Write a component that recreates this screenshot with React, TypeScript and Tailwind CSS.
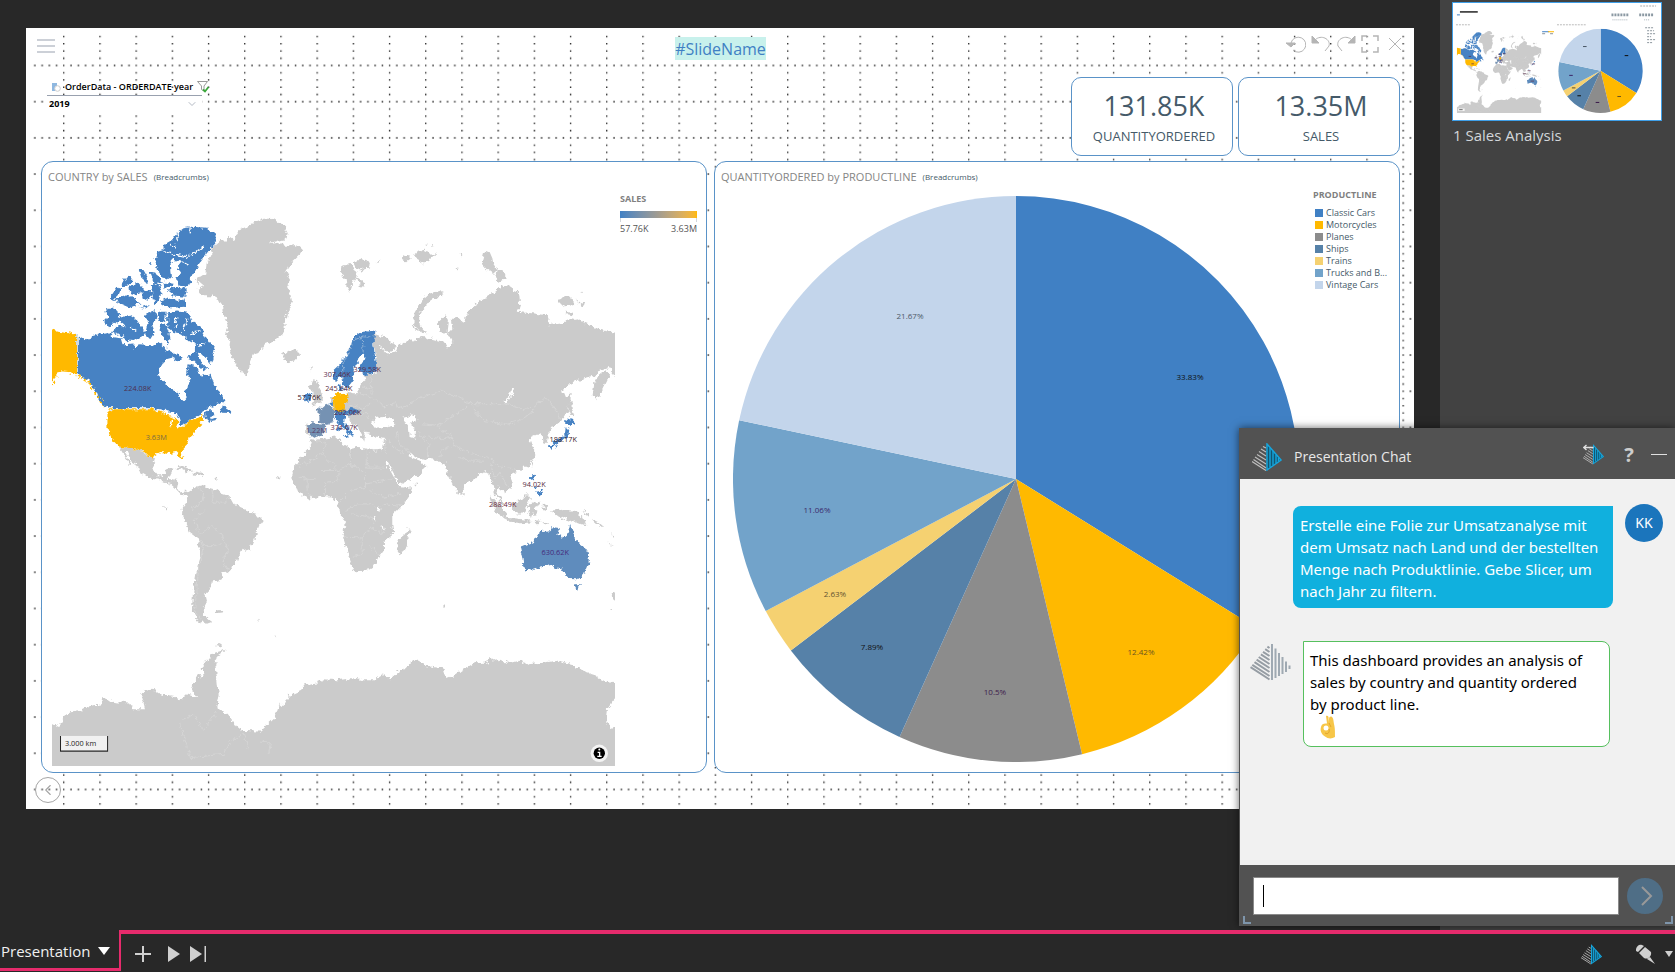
import React from 'react';
import { ChevronDown, ChevronLeft } from 'lucide-react';

// lx / ly: where the percentage sits inside the 566 x 566 pie
const products = [
  { name: 'Classic Cars', share: 33.83, color: '#4080c4', label: '#101010', lx: 457, ly: 181 },
  { name: 'Motorcycles', share: 12.42, color: '#ffb900', label: '#6b5420', lx: 408, ly: 456 },
  { name: 'Planes', share: 10.5, color: '#8c8c8c', label: '#3c1c4c', lx: 262, ly: 496 },
  { name: 'Ships', share: 7.89, color: '#5681a8', label: '#101010', lx: 139, ly: 451 },
  { name: 'Trains', share: 2.63, color: '#f5d171', label: '#5f5230', lx: 102, ly: 398 },
  { name: 'Trucks and B...', share: 11.06, color: '#72a3ca', label: '#3c2a6c', lx: 84, ly: 314 },
  { name: 'Vintage Cars', share: 21.67, color: '#c3d5eb', label: '#4d5a68', lx: 177, ly: 120 },
];

const mapLabels = [
  { text: '224.08K', x: 323, y: 603, color: '#4e2f4e' },
  { text: '3.63M', x: 378, y: 750, color: '#7a6a45' },
  { text: '307.46K', x: 920, y: 560, color: '#5a2c4a' },
  { text: '329.58K', x: 1010, y: 544, color: '#5a2c4a' },
  { text: '245.64K', x: 925, y: 602, color: '#5a2c3f' },
  { text: '57.76K', x: 836, y: 630, color: '#3a2028' },
  { text: '202.06K', x: 952, y: 675, color: '#5a2c4a' },
  { text: '374.67K', x: 941, y: 718, color: '#5a2c4a' },
  { text: '1.22M', x: 858, y: 727, color: '#5c4068' },
  { text: '188.17K', x: 1597, y: 755, color: '#3a2028' },
  { text: '94.02K', x: 1510, y: 891, color: '#5a2c3f' },
  { text: '288.49K', x: 1416, y: 950, color: '#6a2c3c' },
  { text: '630.62K', x: 1573, y: 1094, color: '#46297a' },
];

const point = (share: number) => {
  const angle = (share / 100) * Math.PI * 2;
  return [283 + 283 * Math.sin(angle), 283 - 283 * Math.cos(angle)];
};

const slices = products.map((product, index) => {
  const start = products.slice(0, index).reduce((sum, p) => sum + p.share, 0);
  const [x1, y1] = point(start);
  const [x2, y2] = point(start + product.share);
  return { ...product, d: `M283 283L${x1} ${y1}A283 283 0 0 1 ${x2} ${y2}Z` };
});

const PieShapes = () => (
  <>
    {slices.map((slice) => (
      <path key={slice.name} d={slice.d} fill={slice.color} />
    ))}
  </>
);

const MapShapes = ({ id, rough = false }: { id: string; rough?: boolean }) => (
  <>
    <defs>
      <filter id={`${id}-coast`} x="0" y="0" width="1" height="1">
        <feTurbulence type="fractalNoise" baseFrequency="0.07" numOctaves="3" seed="4" />
        <feDisplacementMap in="SourceGraphic" scale="20" xChannelSelector="R" yChannelSelector="G" />
      </filter>
      <clipPath id={`${id}-frame`}>
        <rect x="66" y="60" width="1686" height="1665" />
      </clipPath>
    </defs>
    <g clipPath={`url(#${id}-frame)`}>
      <g filter={rough ? `url(#${id}-coast)` : undefined}>
        <rect x="0" y="0" width="1860" height="1800" fill="none" />

        {/* Land without sales */}
        <g fill="#cbcbcb">
          <path d="M556 160L570 148L585 152L598 140L612 150L618 132L630 118L655 108L672 96L700 86L725 86L742 96L760 108L772 130L765 148L740 152L712 162L740 158L765 168L790 162L800 164L816 178L806 196L790 212L775 225L768 245L782 270L770 290L780 310L785 335L776 355L770 380L762 400L764 425L735 450L705 462L690 485L670 492L660 515L652 556L635 548L618 525L605 505L597 475L600 450L585 430L592 400L582 370L575 335L545 318L515 318L500 300L520 288L497 268L525 250L530 215L548 190L540 180Z" />
          <path d="M267 770L325 775L350 792L362 806L375 800L370 820L370 840L385 858L405 852L412 832L427 835L418 855L412 865L435 868L444 875L440 895L455 905L472 903L478 914L455 914L435 893L420 880L400 877L385 864L358 862L330 845L315 820L295 795L290 785L282 785L308 824L300 822L285 800Z" />
          <path d="M435 832L455 825L490 842L472 845L455 836ZM490 852L500 843L522 848L518 856Z" />
          <g transform="translate(0 810)">
            <path d="M472 95L500 78L515 75L545 85L560 88L575 100L600 108L615 135L650 150L680 160L697 178L678 205L672 240L660 262L630 272L620 300L598 332L575 335L582 352L565 360L545 362L540 385L525 400L530 420L520 440L522 465L545 482L525 490L500 478L485 450L488 400L498 340L508 280L508 235L480 215L455 165L458 140L470 125Z" />
            <path d="M557 450L575 448L577 458L562 460ZM680 474L692 480L686 482ZM732 522L740 522L736 528ZM556 556L578 550L570 560ZM400 137l10 2 -4 5zM555 50l6 2 -2 10zM742 46l8 4 -2 8z" />
            <path d="M40 785L66 790L88 795L100 770L120 755L150 750L180 735L215 730L220 708L240 722L300 728L310 745L345 745L335 705L345 685L375 688L395 702L430 705L450 718L470 700L498 710L482 680L500 645L520 650L517 615L535 590L545 578L588 566L560 585L555 610L560 650L565 700L558 740L590 760L620 800L645 810L690 812L735 770L748 725L760 735L775 705L810 690L825 670L860 665L880 655L920 658L960 652L1000 658L1030 658L1055 643L1078 655L1100 635L1125 622L1145 600L1165 600L1180 615L1235 622L1240 638L1262 652L1290 630L1325 608L1370 605L1378 590L1385 602L1410 595L1435 608L1470 598L1490 610L1540 605L1580 600L1630 612L1650 628L1690 640L1720 662L1780 672L1780 700L1752 715L1728 745L1725 770L1735 805L1780 790L1780 960L40 960Z" />
          </g>
          <g transform="translate(720 0)">
            <path d="M308 428L345 440L372 465L360 485L340 480L335 470L325 465L350 495L375 485L380 465L400 455L430 450L455 440L480 445L520 455L530 475L548 455L540 440L505 420L505 395L525 372L535 390L530 430L545 415L540 385L560 380L575 395L590 370L610 345L650 320L690 285L715 290L745 310L748 340L740 365L790 370L830 375L835 405L870 400L910 385L960 405L990 420L1060 432L1060 565L1032 555L1012 530L985 540L965 560L930 570L900 575L870 605L895 620L893 660L870 690L850 705L835 725L828 757L815 757L812 728L795 735L775 745L790 780L790 800L770 825L745 840L728 845L715 852L727 880L722 892L705 905L690 895L680 885L678 905L690 925L705 947L692 942L672 912L668 880L655 850L640 845L625 855L600 870L577 890L575 905L560 909L545 880L530 850L525 820L500 812L470 807L440 802L413 785L425 805L450 815L467 828L450 850L400 877L385 882L370 850L345 805L333 785L336 765L342 742L300 737L285 718L278 735L290 750L272 742L265 715L245 700L235 680L215 672L195 670L188 650L176 640L186 622L205 612L225 612L258 605L275 578L290 565L282 560L285 553L316 550L316 500L308 455Z" />
            <path d="M125 750L155 745L205 740L215 760L240 775L265 770L310 780L330 778L348 800L345 815L370 860L385 885L390 895L425 890L420 905L395 945L365 975L365 1000L368 1030L340 1055L340 1080L325 1100L310 1125L285 1140L252 1142L240 1115L230 1080L216 1035L225 1000L205 960L200 935L185 918L165 917L110 925L85 905L68 880L65 855L75 825L95 795L120 770Z" />
            <path d="M30 485L45 490L60 480L80 482L86 495L75 508L50 516L35 508L40 500ZM212 230L235 222L250 235L262 255L245 280L240 308L228 290L225 265L212 255ZM250 215L275 207L298 215L295 235L275 242L258 232ZM258 258L272 268L282 290L268 288ZM390 205L415 192L420 205L405 218ZM430 195L460 172L470 190L495 190L480 205L460 220L440 210ZM458 162l10 -2 -3 8zM480 165l9 2 -6 4z" />
            <path d="M425 400L432 370L455 330L480 310L510 300L515 312L480 330L460 355L445 380L448 405L470 430L440 418ZM632 220L640 190L655 182L665 205L668 225L678 240L670 255L650 240ZM680 240L695 240L705 265L685 275L675 272ZM862 330L880 318L905 325L910 345L880 348ZM915 332L942 340L935 350ZM882 362L900 365L905 375L890 372ZM318 214l12 -2 -4 7zM566 192l9 0 -3 5zM553 232l8 1 -3 5zM928 307l8 -2 -2 5z" />
            <path d="M970 580L985 555L1005 540L1014 560L995 600L975 630L965 615ZM894 608L902 615L902 650L910 677L898 677L892 650ZM782 815L790 812L786 832ZM125 570L140 572L145 590L160 615L162 630L140 640L122 646L135 628L125 610L117 590ZM108 700L118 700L116 736L107 733ZM118 530l6 2 -2 10z" />
          </g>
          <g transform="translate(900 810)">
            <path d="M235 202L240 215L225 265L210 278L200 262L205 235L222 222ZM391 85L402 98L398 108L390 100ZM475 108L490 115L515 142L532 165L522 174L500 157L480 127ZM525 172L560 174L590 178L605 185L570 188L530 182ZM612 180L632 180L629 187L612 188ZM635 186L655 182L640 194ZM545 125L575 115L590 98L600 112L587 140L580 160L555 158L545 145Z" />
            <path d="M596 132L625 123L627 130L608 138L620 165L612 166L605 155L600 170L594 150ZM640 126L648 140L643 154L638 140ZM660 150L690 148L735 155L755 172L770 194L735 187L705 177L680 165ZM752 150L776 162L770 168ZM782 175L804 186L818 198L798 190ZM840 218L852 224L852 232ZM828 242L848 258L842 258ZM856 390L842 405L848 418L860 420ZM332 430L344 432L338 438ZM838 444l6 2 -4 3zM248 70l14 0 -6 5z" />
          </g>
        </g>

        {/* Inland waters */}
        <g transform="translate(720 0)" fill="#ffffff">
          <path d="M303 698L315 680L345 675L352 685L372 682L374 702L340 710L315 712ZM400 680L430 670L437 688L420 698L436 722L434 742L417 737L415 712L402 695Z" />
          <path d="M318 952l8 -4 4 10 -8 6zM312 974l4 18M335 1005l3 14" stroke="#ffffff" strokeWidth="4" />
          <path d="M700 634L718 622L727 596" fill="none" stroke="#ffffff" strokeWidth="6" />
        </g>

        {/* Country borders */}
        <g fill="none" stroke="#dadada" strokeWidth="2">
          <path d="M395 875L412 866M418 882L436 872M500 890L520 905L515 935L490 955L480 950M545 895L550 935L585 935L600 918M520 960L495 990L500 1015L512 1032L545 1005L572 1030L580 1055L595 1080L575 1110L595 1145M508 1045L520 1065L555 1065L572 1060M520 1065L505 1130L500 1200L492 1260L510 1285M455 1585L490 1570L520 1620L560 1560M448 1600L480 1700L580 1690L600 1650L640 1630L655 1680M690 1650L720 1655L715 1690" />
          <g transform="translate(720 0)">
            <path d="M340 650L370 640L395 655L440 625L510 603L560 620L600 640L700 640L750 655L790 650L825 620L850 650L870 690M600 645L640 690L700 703L750 690L790 660M455 700L500 705L540 680L590 650M500 710L540 735L550 765L600 790L650 800L690 830L735 835M470 740L520 745L545 740M500 810L520 775L545 765M565 800L600 812L640 812M660 820L670 860L690 850L710 890M232 610L262 608L300 620L345 650M240 645L280 655L300 640M250 670L290 670L300 690M380 720L385 760L415 785M440 725L475 760L470 800M350 745L370 770L400 790M300 560L305 610M275 590L300 595M340 740L345 790" />
            <path d="M130 750L165 755L155 790L205 840L240 820L240 775M290 775L290 830L340 830M155 790L110 820L75 825M150 840L205 840M165 915L165 880L205 870L205 840M240 820L285 850L285 890L240 900L205 935M285 880L340 870L370 860M300 900L340 920L395 910M225 960L260 940L310 940M218 1040L275 1042L300 1010L340 1030M275 1042L275 1090L250 1100M300 1060L325 1100M245 970L300 980L310 1000M320 960L345 940L395 945M110 860L110 900L125 920M85 860L130 865" />
          </g>
        </g>

        {/* Canada */}
        <g fill="#4682c3">
          <path d="M400 165L425 150L440 130L460 115L490 110L530 113L555 135L558 152L540 175L522 200L505 225L490 245L478 262L484 280L465 292L445 285L440 265L452 250L440 235L455 215L430 208L418 215L422 262L408 270L395 262L388 245L380 240L376 210L382 185L400 180Z" />
          <path d="M393 330L420 322L445 332L460 328L463 350L435 352L400 350ZM410 300L440 292L470 298L465 320L430 316ZM362 285L380 278L397 300L388 330L375 345L368 320ZM326 240L340 240L353 262L352 282L335 267ZM358 248L378 250L395 278L370 277ZM288 262L306 258L302 278L288 287L272 292ZM238 324L262 290L275 294L270 308L250 328ZM250 328L290 316L312 325L330 340L300 352L272 340ZM298 288L325 278L342 300L320 315L300 308ZM333 305L355 298L367 314L352 332L338 324ZM355 218l8 -2 -2 8zM400 275L430 278L428 290L402 292ZM330 350L355 345L352 355Z" />
          <path d="M228 353L250 353L273 372L262 395L240 411L221 402L232 380ZM262 385L300 376L318 388L332 410L347 425L335 442L310 452L290 450L262 430L245 424L262 408L288 408ZM345 370L374 360L380 385L365 402L374 425L360 447L345 432L352 400ZM384 362L406 362L406 387L390 396L382 380ZM411 370L440 364L477 368L487 395L512 410L527 440L554 478L547 500L541 522L525 497L505 492L515 520L537 542L510 532L485 507L470 500L497 485L497 460L478 450L455 430L430 425L411 412ZM425 492L445 490L455 508L435 515Z" />
          <path d="M143 435L168 450L180 440L210 432L240 428L248 440L275 445L280 462L310 460L318 478L325 462L365 465L385 455L400 470L412 480L410 455L395 430L388 405L405 400L415 425L418 450L410 478L430 490L425 505L405 510L390 535L384 560L400 575L412 590L440 602L458 634L466 625L464 600L475 590L478 570L468 545L472 525L500 530L512 560L540 550L548 575L560 600L582 620L585 635L540 650L520 665L495 680L480 695L450 705L448 690L440 668L400 660L375 655L232 655L205 620L195 595L175 570L143 555Z" />
          <path d="M568 655L585 643L602 668L575 667ZM524 668L540 655L550 672L538 688L562 680L555 690L530 694Z" />
        </g>
        <path d="M400 185L430 192L470 200M440 130L445 150M520 170L490 190L470 205M455 215L475 225M420 160L435 175M480 112L478 130M300 410L320 425M440 380L435 410M470 385L460 420M260 400L285 412M505 425L480 430M525 460L500 465" fill="none" stroke="#ffffff" strokeWidth="4" />
        <path d="M235 655L375 655L410 665" fill="none" stroke="#ffffff" strokeWidth="3" />

        {/* United States */}
        <g fill="#ffb900">
          <path d="M40 414L66 418L90 425L120 430L141 435L141 553L115 545L90 543L78 560L66 572L40 580Z" />
          <path d="M232 657L375 657L400 664L412 674L430 677L445 692L442 710L470 700L495 687L518 670L525 690L508 702L495 722L478 737L475 757L455 777L452 787L460 808L450 804L442 784L420 788L390 785L372 795L365 808L350 790L325 775L290 772L265 768L245 745L232 715Z" />
        </g>
        <path d="M145 556L178 578L196 610L222 648M68 582L80 570" fill="none" stroke="#ffb900" strokeWidth="7" strokeDasharray="9 8" />
        <path d="M395 668L428 676L436 690M420 708L424 685M440 712L462 702" fill="none" stroke="#ffffff" strokeWidth="5" />

        {/* Europe, Asia and Australia */}
        <g transform="translate(720 0)" fill="#4682c3">
          <path d="M187 570L188 540L215 515L235 480L250 440L275 422L315 418L312 440L308 460L316 520L318 545L285 555L268 545L268 525L285 500L280 488L268 498L262 520L250 530L247 570L232 590L220 587L215 553L200 572Z" />
          <path d="M201 586L212 580L216 596L206 603ZM219 592l8 2 -4 8zM105 612L122 604L121 628L104 633ZM172 638L190 633L190 648ZM192 680L215 666L223 685L217 695L235 713L247 725L241 737L225 717L205 702ZM220 735L240 732L233 742ZM200 712L209 712L207 727ZM192 664L245 653L264 658L260 670L220 674L198 676Z" />
          <path d="M886 690L900 684L914 697L900 706L886 706ZM884 714L895 714L893 737L875 751L855 760L843 767L850 752L872 742L882 730ZM833 765L845 763L841 778ZM850 767L864 762L860 771ZM782 852L793 850L789 873L780 866ZM793 904L813 901L811 915L798 913ZM790 885l12 4 -4 6z" />
        </g>
        <g transform="translate(720 0)">
          <path d="M133 660L150 655L167 640L192 655L190 692L170 703L143 696L150 674ZM113 698L165 704L157 735L125 743L117 730Z" fill="#7592b3" />
          <path d="M190 620L205 603L209 612L230 610L233 635L220 645L223 662L210 665L192 657Z" fill="#ffb900" />
          <path d="M218 565L216 525L233 485L248 450L275 440L278 490M300 440L278 440M165 703L192 692" fill="none" stroke="#b9cbe0" strokeWidth="2" />
        </g>
        <g transform="translate(900 810)" fill="#5e8cbd">
          <path d="M567 260L605 245L625 215L655 212L665 200L687 203L682 222L705 232L712 215L717 192L726 215L737 240L757 255L774 280L773 305L757 345L740 356L715 355L700 337L690 320L680 330L660 310L625 318L580 333L575 295ZM729 371L750 371L740 390Z" />
        </g>
      </g>
    </g>
  </>
);

const WorldMap = () => (
  <svg viewBox="66 60 1686 1665" className="block w-full font-['Open_Sans',sans-serif]" role="img" aria-label="COUNTRY by SALES">
    <MapShapes id="map" rough />
    <g fontSize="22" textAnchor="middle">
      {mapLabels.map((label) => (
        <text key={label.text} x={label.x} y={label.y} fill={label.color}>
          {label.text}
        </text>
      ))}
    </g>
    <rect x="90" y="1635" width="144" height="47" fill="#f1f1f1" />
    <path d="M91.500 1635V1680.500H232.500V1635" fill="none" stroke="#222222" strokeWidth="3" />
    <text x="105" y="1665" fontSize="22" fill="#222222">3.000 km</text>
    <circle cx="1705" cy="1687" r="26" fill="#f4f4f4" />
    <circle cx="1705" cy="1687" r="17" fill="#000000" />
    <path d="M1700 1684h6v12M1699 1696h13" fill="none" stroke="#ffffff" strokeWidth="4" />
    <circle cx="1705" cy="1676" r="3" fill="#ffffff" />
  </svg>
);

const Pyramid = ({ className }: { className: string }) => (
  <svg viewBox="0 0 40 38" className={className} fill="none" aria-hidden="true">
    <path d="M19 5L16.900 3.600M19 9L14.700 6.200M19 13L12.500 8.800M19 17L10.400 11.400M19 21L8.200 14M19 25L6.100 16.600M19 29L4 19.200M19 33L1.800 21.800M19 36.500L0 24.200" stroke="#969da4" strokeWidth="2" />
    <path d="M21.500 1V37M25 5.500V35M28.500 10V33M32 14V31M35.500 18.500V29M39 22.500V26" stroke="#9fa9b2" strokeWidth="2" />
  </svg>
);

const BluePyramid = ({ className, back }: { className: string; back?: boolean }) => (
  <svg viewBox="0 0 30 28" className={className} fill="none" aria-hidden="true">
    <path d="M14 5L11 3.500M14 9L9 6M14 13L7 8.500M14 17L5 11.500M14 21L3 14M14 25L1.500 16.500M14 27.500L0 18.500" stroke="#bdbdbd" strokeWidth="1.200" />
    <path d="M15 1L29 17L15 27Z" fill="#12556f" stroke="#16a5dc" strokeWidth="1.500" />
    <path d="M18 5V24M21 8V22M24 12V20M26.500 15V18" stroke="#16a5dc" strokeWidth="1.400" />
    {back && <path d="M15 4H1M5 0.500L1 4L5 7.500" stroke="#e0e0e0" strokeWidth="2" />}
  </svg>
);

const OkHand = () => (
  <svg viewBox="0 0 16 24" className="ml-2.5 h-6 w-4" role="img" aria-label="OK hand">
    <path d="M6 1C8 0 9 2 8.500 4L9 8C9 5 8.500 1.500 11 1.500C13.500 2 13.500 6 14 9C15 13 15 16 15 22C12 24 8 24 5 21.500C1 19 0 15 1 12C1.500 9 4 8 7 8.500Z" fill="#f7c648" />
    <circle cx="6" cy="13" r="2.500" fill="#ffffff" />
    <path d="M9 8L11 12M5 18C8 20 10 17 9 14" fill="none" stroke="#e3a62c" />
  </svg>
);

const SlideGrid = () => (
  <svg className="absolute inset-0 h-full w-full" aria-hidden="true">
    <defs>
      <pattern id="grid" x="0.900" y="0.300" width="36.200" height="36.200" patternUnits="userSpaceOnUse">
        <path d="M0.500 0.200v1.500M0.500 7.500v1.500M0.500 14.700v1.500M0.500 21.900v1.500M0.500 29.200v1.500M7.200 1h1.500M14.500 1h1.500M21.700 1h1.500M29 1h1.500" stroke="#222222" strokeWidth="1.600" />
      </pattern>
    </defs>
    <rect width="100%" height="100%" fill="url(#grid)" />
    <rect width="100%" height="3" fill="#ffffff" />
    <rect width="3" height="100%" fill="#ffffff" />
  </svg>
);

const Slicer = () => (
  <label className="flex h-[35px] w-[155px] flex-col text-[9px] font-semibold text-black">
    <span className="flex h-[19px] items-center border-b border-gray-400 pt-0.5 whitespace-nowrap">
      <svg viewBox="0 0 10 10" className="mr-1 ml-1 h-[10px] w-[10px] shrink-0" aria-hidden="true">
        <path d="M1 1h5v3H4v5H1z" fill="#8fb8e0" />
        <circle cx="6.500" cy="6.500" r="2.800" fill="#ffffff" stroke="#cccccc" />
      </svg>
      OrderData - ORDERDATE year
      <svg viewBox="0 0 12 12" className="ml-1 h-3 w-3 shrink-0" fill="none" aria-hidden="true">
        <path d="M0.500 0.500h10L7 5v5L4.500 8.500V5Z" stroke="#999999" />
        <path d="M6 8.500L8 10.500L11.500 6" stroke="#3aa83a" strokeWidth="1.800" />
      </svg>
    </span>
    <span className="relative flex h-4 items-center bg-white">
      <select className="w-full appearance-none bg-transparent pl-0.5 font-bold" defaultValue="2019">
        <option>2019</option>
      </select>
      <ChevronDown className="absolute right-1 h-3 w-3 text-gray-400" strokeWidth={1.5} />
    </span>
  </label>
);

const Kpi = ({ value, name }: { value: string; name: string }) => (
  <div className="flex h-[79px] w-[162px] flex-col items-center justify-center rounded-[10px] border border-[#5a93c8] bg-white pt-0.5 pl-1 text-[#455a69]">
    <div className="text-[27px] leading-9">{value}</div>
    <div className="text-[13px] leading-6">{name}</div>
  </div>
);

const PanelTitle = ({ children }: { children: string }) => (
  <div className="flex h-[30px] items-center gap-1.5 px-1.5 text-[11px] text-[#858585]">
    {children}
    <span className="text-[8px] text-[#455a69]">(Breadcrumbs)</span>
  </div>
);

const Thumbnail = () => (
  <svg viewBox="0 0 210 118" className="block w-full border border-[#3f9fe8] bg-white" aria-hidden="true">
    <svg x="4" y="27" width="85" height="84" viewBox="66 60 1686 1665">
      <MapShapes id="thumb" />
      <path d="M300 594h50M355 742h50M890 550h60M980 540h60M900 600h50M820 622h50M920 668h60M910 708h60M1560 745h70M1480 880h60M1390 940h60M1540 1088h70" stroke="#5a2c4a" strokeWidth="14" />
      <path d="M90 1660h130" stroke="#f4f4f4" strokeWidth="50" />
      <path d="M110 1660h70" stroke="#333333" strokeWidth="14" />
    </svg>
    <svg x="106" y="26" width="86" height="85" viewBox="0 0 566 566">
      <PieShapes />
      {slices.map((slice) => (
        <rect key={slice.name} x={slice.lx - 12} y={slice.ly - 4} width="24" height="7" fill={slice.label} />
      ))}
    </svg>
    <path d="M7 9h18" stroke="#222222" strokeWidth="1.500" />
    <path d="M4 12h3" stroke="#4080c4" />
    <path d="M3 22h15M105 22h30" stroke="#bbbbbb" strokeWidth="1" strokeDasharray="2 1" />
    <path d="M160 12h18M188 12h14" stroke="#8b99a3" strokeWidth="3" strokeDasharray="2 1" />
    <path d="M161 17h16M193 17h6" stroke="#a9b3ba" strokeDasharray="1 1" />
    <path d="M90 29h7" stroke="#4080c4" />
    <path d="M96 29h6" stroke="#ffb900" />
    <path d="M90 31h3M98 31h3" stroke="#8a949c" />
    <path d="M194 25h9M196 28h7M196 31h8M196 34h4M196 37h9M196 40h6" stroke="#8a949c" strokeDasharray="2 1" />
    <path d="M189 3h16" stroke="#d5d5d5" strokeWidth="2" strokeDasharray="2 1" />
  </svg>
);

const ChatWindow = () => (
  <section className="absolute right-0 bottom-1 flex h-[498px] w-[436px] flex-col border-l border-[#525252] bg-[#f1f1f1] font-['Noto_Sans',sans-serif] shadow-[0_0_8px_rgba(0,0,0,0.6)]">
    <header className="flex h-[51px] shrink-0 items-center bg-[#525252] pt-0.5 pl-3 text-[#e8e8e8]">
      <BluePyramid className="mt-1 h-7 w-[30px]" />
      <h2 className="ml-3 flex-1 pt-1 font-['Open_Sans',sans-serif] text-[14px]">Presentation Chat</h2>
      <button type="button" aria-label="Back to assistant"><BluePyramid back className="h-[21px] w-[21px]" /></button>
      <button type="button" className="ml-[17px] w-4 text-[20px] font-bold text-[#cccccc]">?</button>
      <button type="button" aria-label="Minimize" className="mr-2 ml-3.5 h-px w-4 bg-[#e0e0e0]" />
    </header>
    <div className="flex-1 text-[15px] leading-[22px]">
      <div className="mt-[27px] flex gap-3 pl-[53px]">
        <p className="w-[320px] rounded-lg rounded-tr-none bg-[#10b0de] pt-2 pb-1.5 pl-[7px] text-white">
          Erstelle eine Folie zur Umsatzanalyse mit dem Umsatz nach Land und der bestellten Menge nach Produktlinie. Gebe Slicer, um nach Jahr zu filtern.
        </p>
        <span className="-mt-0.5 flex h-[38px] w-[38px] items-center justify-center rounded-full bg-[#1b75bc] text-[14px] text-white">KK</span>
      </div>
      <div className="mt-[33px] flex gap-3 pl-2.5">
        <Pyramid className="mt-0.5 h-[38px] w-[41px]" />
        <div className="w-[307px] rounded-lg rounded-tl-none border border-[#56c05e] bg-white py-[7px] pr-3 pl-1.5 text-black">
          <p>This dashboard provides an analysis of sales by country and quantity ordered by product line.</p>
          <OkHand />
        </div>
      </div>
    </div>
    <footer className="relative flex h-[61px] shrink-0 items-center gap-2 bg-[#525252] pr-3 pl-[13px]">
      <input type="text" aria-label="Message" className="h-[38px] min-w-0 flex-1 border border-[#8a8a8a] bg-white px-2 text-black outline-none" />
      <span className="absolute top-5 left-[23px] h-[22px] w-px bg-black" />
      <button type="button" aria-label="Send" className="flex h-9 w-9 items-center justify-center rounded-full bg-[#4f6e86]">
        <svg viewBox="0 0 12 20" className="ml-1 h-5 w-3" fill="none" stroke="#999999" strokeWidth="2"><path d="M1 1L10 10L1 19" /></svg>
      </button>
      <span className="absolute bottom-0.5 left-[3px] h-2 w-2 border-b-2 border-l-2 border-[#7e95ab]" />
      <span className="absolute right-0.5 bottom-0.5 h-2 w-2 border-r-2 border-b-2 border-[#7e95ab]" />
    </footer>
  </section>
);

const Slide = () => (
  <div className="relative flex aspect-[1388/781] w-full flex-col bg-white pr-[14px] pl-[15px]">
    <SlideGrid />
    <div className="relative grid h-[49px] shrink-0 grid-cols-[1fr_auto_1fr] items-start pt-[7px]">
      <button type="button" aria-label="Menu" className="-ml-1 text-gray-400">
        <svg viewBox="0 0 18 14" className="mt-1 h-[14px] w-[18px]" stroke="currentColor"><path d="M0 1h18M0 7h18M0 13h18" /></svg>
      </button>
      <h1 className="mt-0.5 h-[23px] bg-[#c8f1ec] text-[16px] leading-6 text-[#4080c4]">#SlideName</h1>
      <div className="flex items-center justify-end gap-[5px] text-[#b5b5b5]">
        <button type="button" aria-label="Reset">
          <svg viewBox="0 0 20 18" className="h-[18px] w-5" fill="none" stroke="currentColor"><path d="M5 8a7.500 7.500 0 1 1 2 7" /><path d="M0 8h9L5 12Z" fill="currentColor" /></svg>
        </button>
        <button type="button" aria-label="Undo">
          <svg viewBox="0 0 20 18" className="h-[18px] w-5" fill="none" stroke="currentColor"><path d="M4 5C10 -1 20 4 18 11L14 16" /><path d="M1 1V8H8Z" fill="currentColor" /></svg>
        </button>
        <button type="button" aria-label="Redo">
          <svg viewBox="0 0 20 18" className="h-[18px] w-5" fill="none" stroke="currentColor"><path d="M16 5C10 -1 0 4 2 11L6 16" /><path d="M19 1V8H12Z" fill="currentColor" /></svg>
        </button>
        <button type="button" aria-label="Full screen">
          <svg viewBox="0 0 18 18" className="h-[18px] w-[18px]" fill="none" stroke="currentColor" strokeWidth="1.500"><path d="M1 6V1h5M12 1h5v5M17 12v5h-5M6 17H1v-5" /></svg>
        </button>
        <button type="button" aria-label="Close" className="-mr-0.5 ml-1">
          <svg viewBox="0 0 14 14" className="h-[14px] w-[14px]" stroke="currentColor"><path d="M1 1L13 13M13 1L1 13" /></svg>
        </button>
      </div>
    </div>
    <div className="relative flex shrink-0 gap-[5px] pb-[5px]">
      <div className="flex-1 pl-1.5"><Slicer /></div>
      <Kpi value="131.85K" name="QUANTITYORDERED" />
      <Kpi value="13.35M" name="SALES" />
    </div>
    <div className="relative flex min-h-0 flex-1 gap-[7px]">
      <section className="flex flex-[666] flex-col rounded-[12px] border border-[#5a93c8] bg-white">
        <PanelTitle>COUNTRY by SALES</PanelTitle>
        <div className="flex flex-1 gap-[5px] pr-[9px] pl-2.5">
          <div className="mt-[18px] flex-1"><WorldMap /></div>
          <div className="w-[77px] text-[9px] text-[#555555]">
            <h3 className="leading-[14px] font-bold text-[#808080]">SALES</h3>
            <div className="mt-[5px] h-[7px] bg-linear-to-r from-[#4080c4] via-[#a29c90] to-[#ffb900]" />
            <div className="h-1 border-x border-gray-300" />
            <div className="flex justify-between leading-[14px]"><span>57.76K</span><span>3.63M</span></div>
          </div>
        </div>
      </section>
      <section className="flex flex-[686] flex-col rounded-[12px] border border-[#5a93c8] bg-white">
        <PanelTitle>QUANTITYORDERED by PRODUCTLINE</PanelTitle>
        <div className="flex flex-1 gap-[14px] pr-2.5 pl-[18px]">
          <svg viewBox="0 0 566 566" className="mt-1 block h-[566px] flex-1 font-['Open_Sans',sans-serif]" role="img" aria-label="QUANTITYORDERED by PRODUCTLINE">
            <PieShapes />
            {slices.map((slice) => (
              <text key={slice.name} x={slice.lx} y={slice.ly + 3} fontSize="8" textAnchor="middle" fill={slice.label}>
                {slice.share}%
              </text>
            ))}
          </svg>
          <div className="w-[76px] text-[9px] text-[#455a69]">
            <h3 className="mb-[9px] leading-[6px] font-bold text-[#808080]">PRODUCTLINE</h3>
            <ul>
              {products.map((product) => (
                <li key={product.name} className="flex h-3 items-center gap-[3px] pl-0.5 whitespace-nowrap">
                  <span className="h-2 w-2 shrink-0" style={{ backgroundColor: product.color }} />
                  {product.name}
                </li>
              ))}
            </ul>
          </div>
        </div>
      </section>
    </div>
    <div className="relative h-9 shrink-0 pt-1">
      <button type="button" aria-label="Previous slide" className="-ml-1.5 flex h-[26px] w-[26px] items-center justify-center rounded-full border border-[#a5a5a5] text-[#a5a5a5]">
        <ChevronLeft className="h-[18px] w-[18px]" strokeWidth={1.5} />
      </button>
    </div>
  </div>
);

const App = () => {
  return (
    <div className="flex min-h-screen flex-col bg-[#282828] font-['Open_Sans','Noto_Sans',sans-serif]">
      <main className="relative flex flex-1 overflow-hidden">
        <div className="min-w-0 flex-1 px-[26px] pt-7"><Slide /></div>
        <aside className="w-[235px] shrink-0 bg-[#424242] pt-0.5 pr-[13px] pl-3 text-[15px] text-[#d2d6da]">
          <Thumbnail />
          <p className="mt-0.5 pl-px leading-6">1 Sales Analysis</p>
        </aside>
        <ChatWindow />
      </main>
      <footer className="flex h-[42px] shrink-0 text-[#d0d0d0]">
        <button type="button" className="flex h-[41px] w-[121px] items-center gap-2 border-r-2 border-b-[3px] border-[#e62b6c] pt-1 pl-px text-[15px] text-[#f0f0f0]">
          Presentation
          <svg viewBox="0 0 12 8" className="h-2 w-3 shrink-0" fill="#ffffff"><path d="M0 0h12L6 8Z" /></svg>
        </button>
        <div className="flex flex-1 items-center border-t-4 border-[#e62b6c] pt-0.5 pr-0.5 pl-3.5">
          <button type="button" aria-label="Add"><svg viewBox="0 0 16 16" className="h-4 w-4" stroke="currentColor" strokeWidth="2"><path d="M8 0v16M0 8h16" /></svg></button>
          <button type="button" aria-label="Play" className="ml-[17px]"><svg viewBox="0 0 12 16" className="h-4 w-3" fill="currentColor"><path d="M0 0L12 8L0 16Z" /></svg></button>
          <button type="button" aria-label="Play to end" className="ml-2.5"><svg viewBox="0 0 16 16" className="h-4 w-4" fill="currentColor"><path d="M0 0L12 8L0 16ZM14.500 0h1.500v16h-1.500z" /></svg></button>
          <div className="flex-1" />
          <button type="button" aria-label="Assistant"><BluePyramid className="h-[21px] w-[21px]" /></button>
          <button type="button" aria-label="Pin" className="ml-[33px]">
            <svg viewBox="0 0 20 20" className="h-5 w-5" fill="currentColor"><path d="M1 5C2 2 4 0 7 1L9 2L3 8L1 7ZM4 9L10 3L16 8C17 12 13 16 9 14ZM15 13L20 20L12 15Z" /></svg>
          </button>
          <button type="button" aria-label="More" className="ml-2.5"><svg viewBox="0 0 8 6" className="h-1.5 w-2" fill="currentColor"><path d="M0 0h8L4 6Z" /></svg></button>
        </div>
      </footer>
    </div>
  );
};

export default App;
